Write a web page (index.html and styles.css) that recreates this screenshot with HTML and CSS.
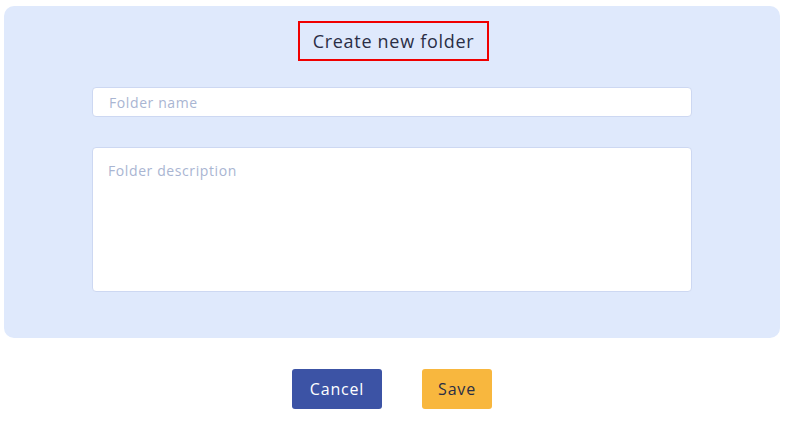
FILE: index.html
```html
<!DOCTYPE html>
<html lang="en">
<head>
<meta charset="utf-8">
<title>Create new folder</title>
<link rel="stylesheet" href="styles.css">
</head>
<body>
<div class="page">
  <section class="panel">
    <h1 class="title">Create new folder</h1>
    <input class="field name" type="text" placeholder="Folder name">
    <textarea class="field desc" placeholder="Folder description"></textarea>
  </section>
  <div class="actions">
    <button class="btn cancel">Cancel</button>
    <button class="btn save">Save</button>
  </div>
</div>
</body>
</html>
```
FILE: styles.css
```css
html, body {
  margin: 0;
  padding: 0;
  background: #ffffff;
}
body {
  font-family: "Open Sans", "Noto Sans", sans-serif;
}
.page {
  padding: 6px 5px 0 4px;
}
.panel {
  background: #dfe9fc;
  border-radius: 10px;
  padding: 15px 0 46px;
  display: flex;
  flex-direction: column;
  align-items: center;
}
.title {
  margin: 0 0 26px 3px;
  box-sizing: border-box;
  height: 40px;
  width: 191px;
  border: 2px solid #f00000;
  font-size: 18px;
  font-weight: 500;
  color: #2a2e45;
  display: flex;
  align-items: center;
  justify-content: center;
  letter-spacing: 0.7px;
}
.field {
  box-sizing: border-box;
  width: 600px;
  background: #ffffff;
  border: 1px solid #cdd8f2;
  border-radius: 4px;
  font-family: inherit;
  font-size: 14px;
  letter-spacing: 0.6px;
  color: #2a2e45;
  outline: none;
  margin: 0;
}
.field::placeholder {
  color: #a9b5d2;
}
.name {
  height: 30px;
  padding: 0 16px;
}
.desc {
  margin-top: 30px;
  height: 145px;
  padding: 13px 15px;
  resize: none;
}
.actions {
  display: flex;
  justify-content: center;
  gap: 40px;
  margin-top: 31px;
}
.btn {
  height: 40px;
  border: none;
  border-radius: 3px;
  font-family: inherit;
  font-size: 16px;
  font-weight: 500;
  letter-spacing: 0.8px;
  padding: 0;
  cursor: pointer;
}
.cancel {
  width: 90px;
  background: #3c53a5;
  color: #ffffff;
}
.save {
  width: 70px;
  background: #f8b73e;
  color: #2a2e45;
}
```
